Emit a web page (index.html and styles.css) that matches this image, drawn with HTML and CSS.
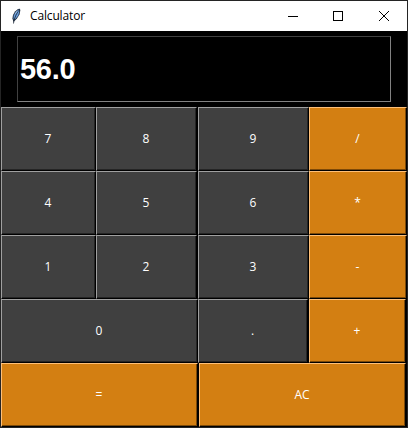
FILE: index.html
```html
<!DOCTYPE html>
<html lang="en">
<head>
<meta charset="utf-8">
<title>Calculator</title>
<link rel="stylesheet" href="styles.css">
</head>
<body>
<div class="window">
  <header class="titlebar">
    <svg class="feather" width="11" height="17" viewBox="0 0 11 17">
      <path d="M2.5 14 1.4 10.5 2 7 4 3.5 7 1 9 .7 9.3 2.5 8.5 6.5 6 10.5 3.5 13Z" fill="#253346"/>
      <path d="M2.5 11.5 2.8 7.5 4.8 4 7.7 1.6 8.2 4 7.2 7.5 4.7 10.8Z" fill="#6a9fde"/>
      <path d="M7.5 2.5 5 7 3 12 2.5 15.5" fill="none" stroke="#172333" stroke-width=".8"/>
      <path d="M4 6 6.5 2.8" stroke="#a5c7ed" stroke-width=".8"/>
    </svg>
    <h1 class="title">Calculator</h1>
    <svg class="controls" width="103" height="12" viewBox="0 0 103 12" fill="none" stroke="#000">
      <path d="M0 6.5H10"/>
      <rect x="45.5" y="1.5" width="9" height="9"/>
      <path d="M91 1 101 11M101 1 91 11"/>
    </svg>
  </header>
  <div class="display"><span class="value">56.0</span></div>
  <main class="keys">
    <div class="row digits">
      <button class="key">7</button><button class="key">8</button><button class="key">9</button><button class="key op">/</button>
    </div>
    <div class="row digits">
      <button class="key">4</button><button class="key">5</button><button class="key">6</button><button class="key op">*</button>
    </div>
    <div class="row digits">
      <button class="key">1</button><button class="key">2</button><button class="key">3</button><button class="key op">-</button>
    </div>
    <div class="row zero">
      <button class="key">0</button><button class="key">.</button><button class="key op">+</button>
    </div>
    <div class="row last">
      <button class="key op">=</button><button class="key op">AC</button>
    </div>
  </main>
</div>
</body>
</html>
```
FILE: styles.css
```css
* { box-sizing: border-box; }
body { margin: 0; background: #000; overflow: hidden; }
.window {
  width: 408px;
  height: 428px;
  border: 1px solid #242424;
  background: #000;
  font-family: "Open Sans", "Noto Sans", sans-serif;
}
.titlebar {
  display: flex;
  align-items: center;
  height: 30px;
  padding: 0 16px 0 10px;
  background: #fff;
}
.title {
  margin: 0 0 0 8px;
  font-size: 12px;
  line-height: 16px;
  font-weight: 400;
  letter-spacing: -0.15px;
  color: #000;
}
.controls { margin-left: auto; }
.display {
  display: flex;
  align-items: center;
  width: 374px;
  height: 66px;
  margin: 5px 0 5px 16px;
  padding-left: 2px;
  border: 1px solid;
  border-color: #414141 #828282 #828282 #414141;
}
.value {
  font: bold 29px/32px "Liberation Sans", Arial, sans-serif;
  letter-spacing: -0.3px;
  color: #fff;
}
.row { display: grid; height: 64px; }
.digits { grid-template-columns: 95px 102px 111px 98px; }
.digits .key:nth-child(2) { margin-right: 1px; }
.zero { grid-template-columns: 197px 110px 97px; }
.zero .key:last-child { margin: 0 -1px 0 1px; width: 97px; }
.last { grid-template-columns: 197px 207px; column-gap: 1px; }
.key {
  margin: 0;
  padding: 0 1px 1px 0;
  border: 1px solid;
  border-color: #a0a0a0 #000 #000 #a0a0a0;
  border-radius: 0;
  background: #404040;
  box-shadow: inset -1px -1px #252525;
  font: 12px/16px "Open Sans", "Noto Sans", sans-serif;
  color: #fff;
}
.key.op {
  border-color: #ffc078 #000 #000 #ffc078;
  background: #d37f12;
  box-shadow: inset -1px -1px #7c4908;
}
```
